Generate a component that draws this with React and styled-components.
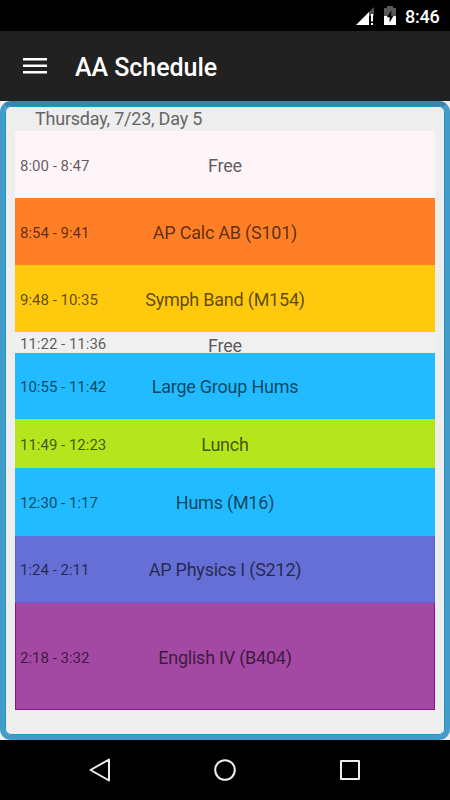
import React from "react";
import styled, { createGlobalStyle } from "styled-components";

const GlobalStyle = createGlobalStyle`
  * { box-sizing: border-box; }
  body { margin: 0; background: #000; font-family: Roboto, sans-serif; }
`;

const Screen = styled.div`
  width: 450px;
  height: 800px;
  display: flex;
  flex-direction: column;
  overflow: hidden;
  background: #000;
`;

const StatusBar = styled.div`
  height: 31px;
  flex: none;
  display: flex;
  align-items: flex-start;
  justify-content: flex-end;
  padding-right: 10px;
  color: #fff;
`;

const SignalIcon = styled.svg`
  width: 20px;
  height: 20px;
  margin: 6px 7px 0 0;
`;

const BatteryIcon = styled.svg`
  width: 14px;
  height: 20px;
  margin: 6px 8px 0 0;
`;

const Clock = styled.span`
  width: 35px;
  margin-top: 6px;
  font-size: 18px;
  line-height: 21px;
  font-weight: 500;
  letter-spacing: -0.2px;
  white-space: nowrap;
`;

const AppBar = styled.header`
  height: 70px;
  flex: none;
  display: flex;
  align-items: center;
  padding: 3px 0 0 23px;
  background: #212121;
  color: #fff;
`;

const MenuIcon = styled.svg`
  width: 24px;
  height: 18px;
  margin: -3px 28px 0 0;
`;

const Title = styled.h1`
  margin: 0;
  font-size: 25px;
  line-height: 30px;
  font-weight: 500;
  letter-spacing: -0.05px;
  white-space: nowrap;
`;

const Content = styled.main`
  height: 639px;
  flex: none;
  background: #eee;
`;

const Panel = styled.section`
  height: 100%;
  padding: 0 10px;
  border: 5px solid #439bc9;
  border-top-color: #3a84ab;
  border-radius: 11px;
  background: #eee;
  box-shadow: inset 0 0 0 1px #1b97ce;
`;

const DateLabel = styled.div`
  height: 25px;
  padding: 1px 0 0 20px;
  font-size: 18px;
  line-height: 24px;
  letter-spacing: -0.22px;
  color: #666;
`;

const Schedule = styled.div`
  display: flex;
  flex-direction: column;
`;

const Period = styled.div`
  height: ${(p) => p.$height}px;
  display: grid;
  grid-template-columns: 105px 210px 105px;
  align-items: start;
  background: ${(p) => p.$color};
  box-shadow: ${(p) =>
    p.$edge
      ? `inset 1px 0 ${p.$edge}, inset -1px 0 ${p.$edge}, inset 0 -1px ${p.$edge}`
      : "none"};
  color: rgba(0, 0, 0, 0.65);
`;

const Time = styled.span`
  padding: ${(p) => p.$top}px 0 0 5px;
  font-size: 15px;
  line-height: 20px;
  white-space: nowrap;
`;

const Course = styled.span`
  padding-top: ${(p) => p.$top}px;
  font-size: 18px;
  line-height: ${(p) => (p.$compact ? 18 : 22)}px;
  letter-spacing: -0.23px;
  text-align: center;
  white-space: nowrap;
`;

const NavBar = styled.nav`
  height: 60px;
  flex: none;
  display: flex;
  justify-content: center;
  align-items: center;
  gap: 95px;
`;

const NavIcon = styled.svg`
  width: 30px;
  height: 30px;
  fill: none;
  stroke: #eee;
  stroke-width: 2;
  stroke-linejoin: round;
`;

const periods = [
  { time: "8:00 - 8:47", course: "Free", height: 67, top: 25, color: "#fff4f8" },
  { time: "8:54 - 9:41", course: "AP Calc AB (S101)", height: 67, top: 25, color: "#ff7f27" },
  { time: "9:48 - 10:35", course: "Symph Band (M154)", height: 67, top: 25, color: "#ffc90e" },
  { time: "11:22 - 11:36", course: "Free", height: 21, top: 2, color: "#f0f0f0", compact: true },
  { time: "10:55 - 11:42", course: "Large Group Hums", height: 66, top: 24, color: "#22bbff" },
  { time: "11:49 - 12:23", course: "Lunch", height: 49, top: 16, color: "#b5e61d" },
  { time: "12:30 - 1:17", course: "Hums (M16)", height: 68, top: 25, color: "#22bbff" },
  { time: "1:24 - 2:11", course: "AP Physics I (S212)", height: 67, top: 24, color: "#666fd6", edge: "#5f62d0" },
  { time: "2:18 - 3:32", course: "English IV (B404)", height: 107, top: 45, color: "#a349a4", edge: "#8b158d" },
];

export default function App() {
  return (
    <Screen>
      <GlobalStyle />
      <StatusBar>
        <SignalIcon viewBox="0 0 20 20">
          <path d="M18 1 L12 7 V10 H18 Z" fill="#505050" />
          <path d="M0 19 L13 6 V19 Z" fill="#fff" />
          <path d="M15 8h2v7.5h-2zM15 17h2v2h-2z" fill="#fff" />
        </SignalIcon>
        <BatteryIcon viewBox="0 0 14 20">
          <path d="M4 0h6v2h3v8H1V2h3z" fill="#585858" />
          <path d="M1 10h12v9H1z" fill="#fff" />
          <path d="M8.5 4.5 L3.8 11.2 H6.6 V16.5 L10.5 9.7 H8 Z" fill="#000" />
        </BatteryIcon>
        <Clock>8:46</Clock>
      </StatusBar>
      <AppBar>
        <MenuIcon viewBox="0 0 24 18">
          <path d="M0 1h24v2.5H0zM0 7.5h24V10H0zM0 14h24v2.5H0z" fill="#fff" />
        </MenuIcon>
        <Title>AA Schedule</Title>
      </AppBar>
      <Content>
        <Panel>
          <DateLabel>Thursday, 7/23, Day 5</DateLabel>
          <Schedule>
            {periods.map((p) => (
              <Period key={p.time} $height={p.height} $color={p.color} $edge={p.edge}>
                <Time $top={p.top}>{p.time}</Time>
                <Course $top={p.compact ? 5 : p.top - 1} $compact={p.compact}>
                  {p.course}
                </Course>
              </Period>
            ))}
          </Schedule>
        </Panel>
      </Content>
      <NavBar>
        <NavIcon viewBox="0 0 30 30">
          <path d="M24 4.5 V25.5 L5.5 15 Z" />
        </NavIcon>
        <NavIcon viewBox="0 0 30 30">
          <circle cx="15" cy="15" r="9.8" />
        </NavIcon>
        <NavIcon viewBox="0 0 30 30">
          <rect x="6" y="6" width="18" height="18" />
        </NavIcon>
      </NavBar>
    </Screen>
  );
}
